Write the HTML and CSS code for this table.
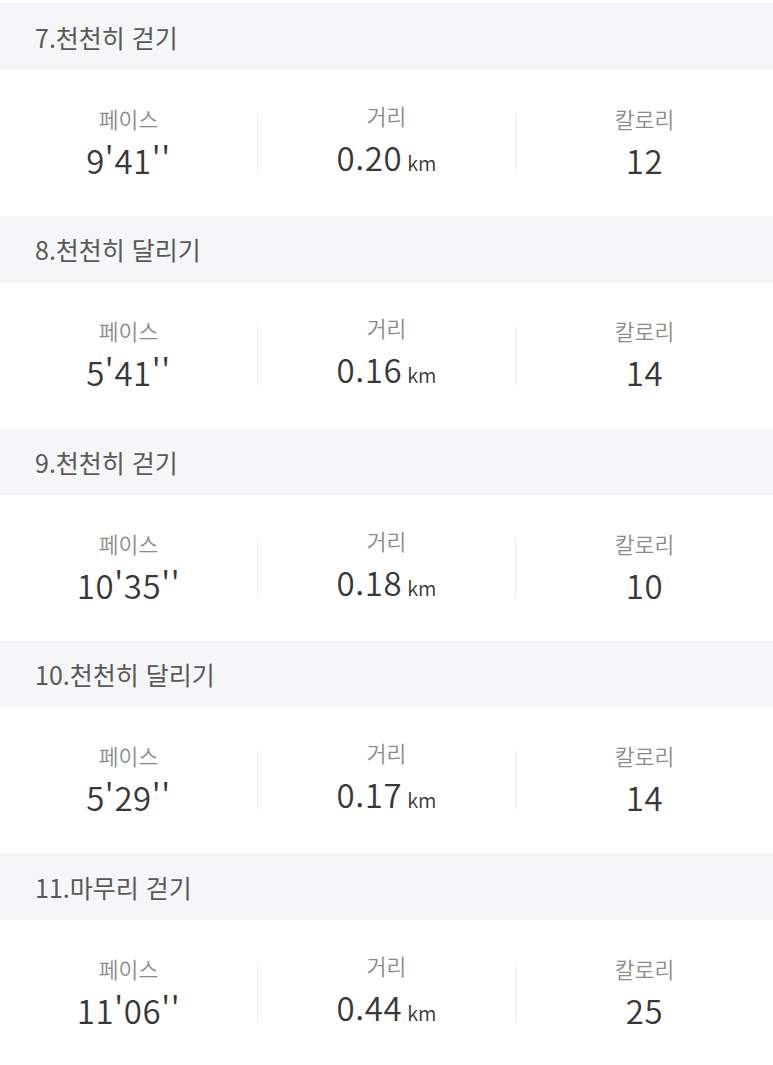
FILE: index.html
```html
<!DOCTYPE html>
<html lang="ko">
<head>
<meta charset="utf-8">
<link rel="stylesheet" href="styles.css">
</head>
<body>
<div class="list">
  <section class="lap">
    <h2 class="lap-title">7.천천히 걷기</h2>
    <div class="stats">
      <div class="stat"><div class="label">페이스</div><div class="value">9'41''</div></div>
      <div class="sep"></div>
      <div class="stat"><div class="label">거리</div><div class="value">0.20<span class="unit">km</span></div></div>
      <div class="sep"></div>
      <div class="stat"><div class="label">칼로리</div><div class="value">12</div></div>
    </div>
  </section>
  <section class="lap">
    <h2 class="lap-title">8.천천히 달리기</h2>
    <div class="stats">
      <div class="stat"><div class="label">페이스</div><div class="value">5'41''</div></div>
      <div class="sep"></div>
      <div class="stat"><div class="label">거리</div><div class="value">0.16<span class="unit">km</span></div></div>
      <div class="sep"></div>
      <div class="stat"><div class="label">칼로리</div><div class="value">14</div></div>
    </div>
  </section>
  <section class="lap">
    <h2 class="lap-title">9.천천히 걷기</h2>
    <div class="stats">
      <div class="stat"><div class="label">페이스</div><div class="value">10'35''</div></div>
      <div class="sep"></div>
      <div class="stat"><div class="label">거리</div><div class="value">0.18<span class="unit">km</span></div></div>
      <div class="sep"></div>
      <div class="stat"><div class="label">칼로리</div><div class="value">10</div></div>
    </div>
  </section>
  <section class="lap">
    <h2 class="lap-title">10.천천히 달리기</h2>
    <div class="stats">
      <div class="stat"><div class="label">페이스</div><div class="value">5'29''</div></div>
      <div class="sep"></div>
      <div class="stat"><div class="label">거리</div><div class="value">0.17<span class="unit">km</span></div></div>
      <div class="sep"></div>
      <div class="stat"><div class="label">칼로리</div><div class="value">14</div></div>
    </div>
  </section>
  <section class="lap">
    <h2 class="lap-title">11.마무리 걷기</h2>
    <div class="stats">
      <div class="stat"><div class="label">페이스</div><div class="value">11'06''</div></div>
      <div class="sep"></div>
      <div class="stat"><div class="label">거리</div><div class="value">0.44<span class="unit">km</span></div></div>
      <div class="sep"></div>
      <div class="stat"><div class="label">칼로리</div><div class="value">25</div></div>
    </div>
  </section>
</div>
</body>
</html>
```
FILE: styles.css
```css
* { box-sizing: border-box; }
html, body { margin: 0; padding: 0; background: #fff; }
body {
  font-family: "Noto Sans CJK KR", "Noto Sans", sans-serif;
  width: 773px;
}
.list { padding-top: 3px; }
.lap-title {
  margin: 0;
  height: 67px;
  display: flex;
  align-items: center;
  padding-left: 35px;
  background: #f5f6f8;
  font-size: 25px;
  font-weight: 400;
  color: #595959;
}
.stats {
  height: 145.5px;
  display: flex;
  align-items: center;
}
.stat {
  flex: 1;
  display: flex;
  flex-direction: column;
  align-items: center;
  gap: 6px;
}
.sep {
  width: 1px;
  height: 60px;
  background: #ececec;
}
.label {
  font-size: 21.5px;
  line-height: 28px;
  color: #8a8a8a;
  font-weight: 350;
}
.value {
  font-size: 33px;
  line-height: 42px;
  color: #383838;
  font-weight: 350;
  letter-spacing: 0.6px;
}
.unit {
  font-size: 20px;
  margin-left: 5px;
  letter-spacing: 0;
}
```
